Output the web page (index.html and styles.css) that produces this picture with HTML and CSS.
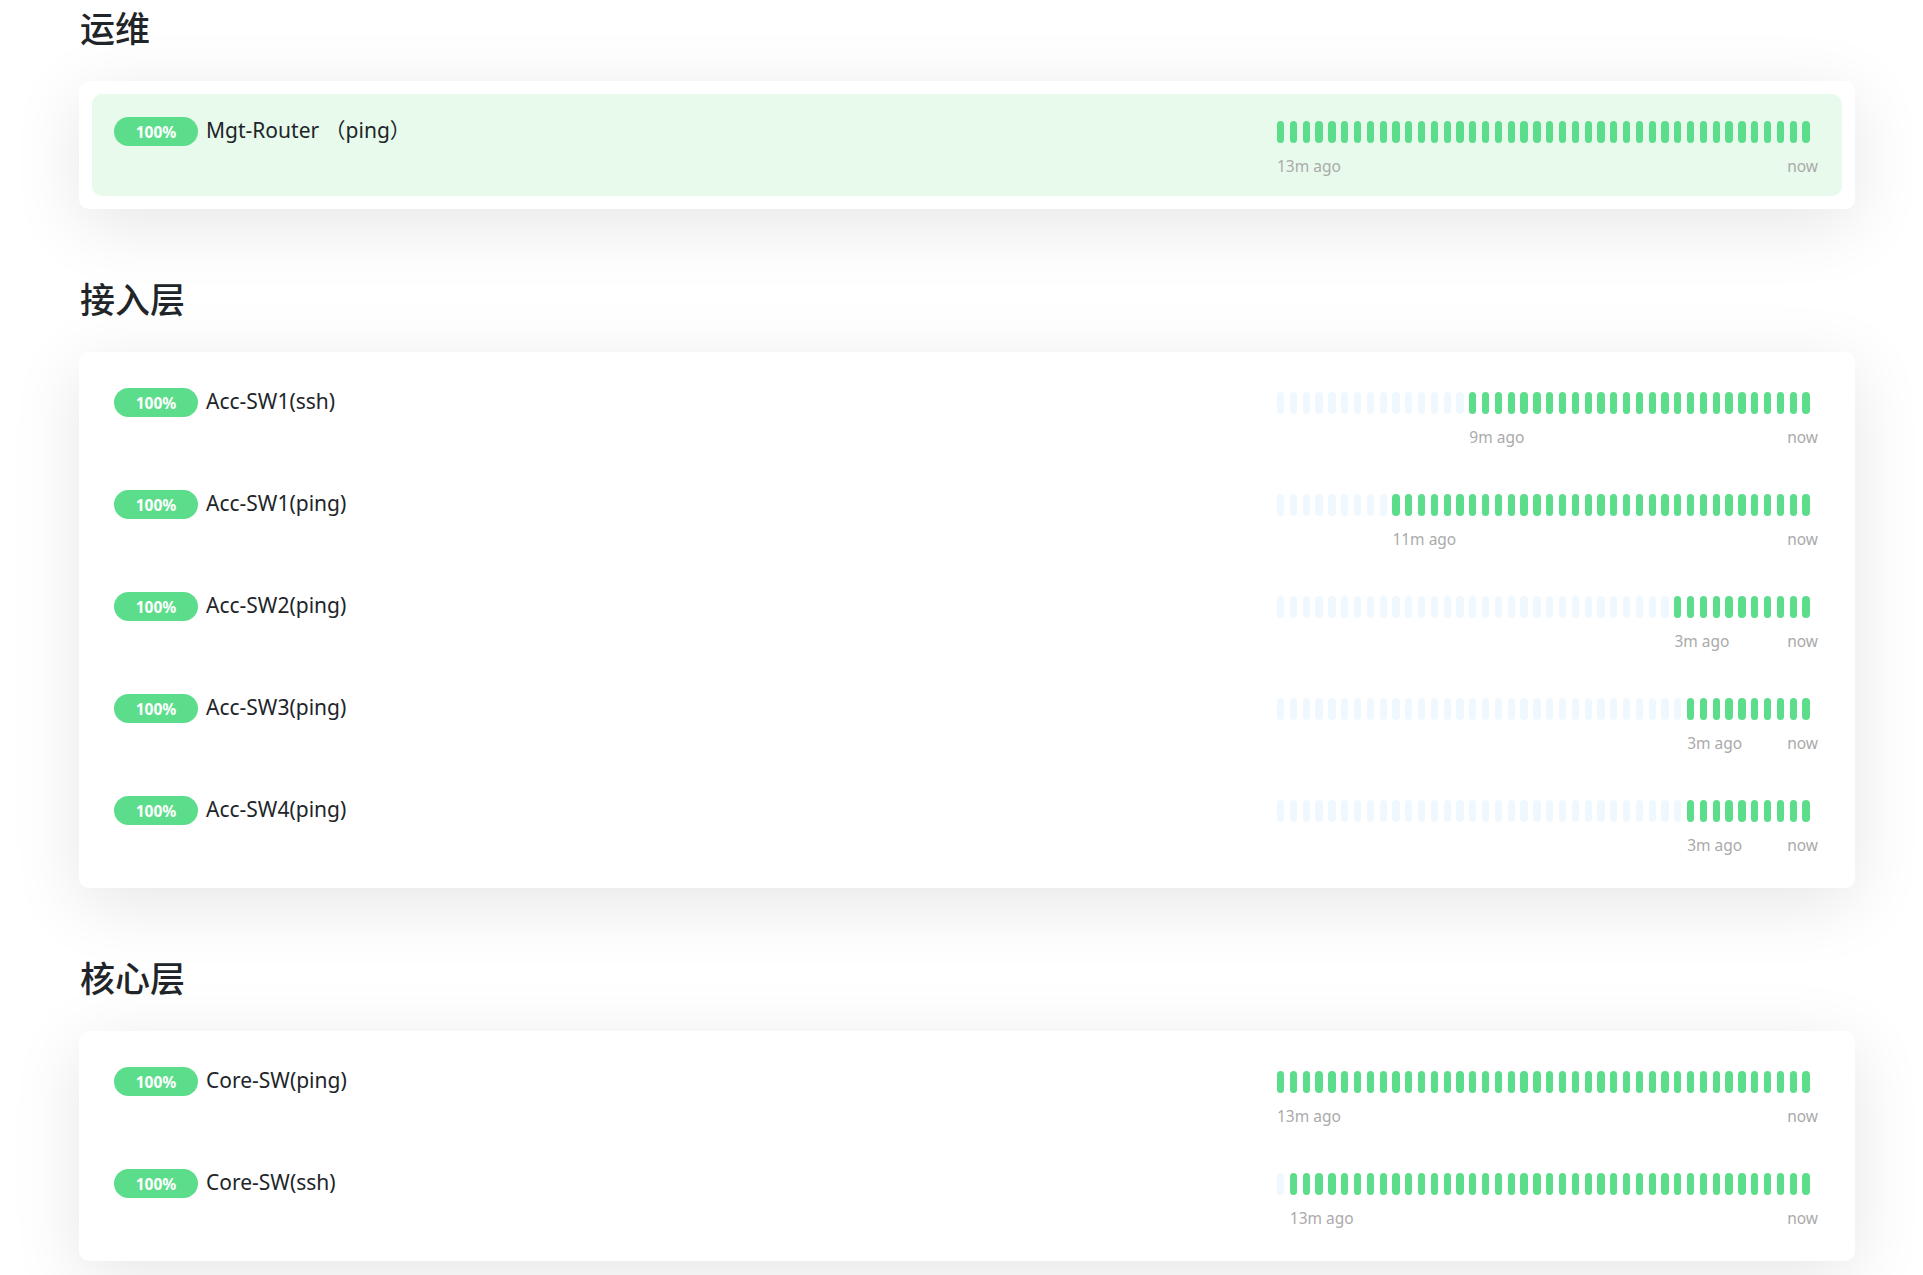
FILE: index.html
```html
<!DOCTYPE html>
<html lang="zh-CN">
<head>
<meta charset="utf-8">
<title>状态页</title>
<link rel="stylesheet" href="styles.css">
</head>
<body>
<main class="page">

  <section class="group">
    <h2 class="group-title">运维</h2>
    <div class="card">
      <div class="item active">
        <div class="info"><span class="pill">100%</span><span class="name">Mgt-Router （ping）</span></div>
        <div class="beats">
          <div class="bar-row"><i class="b"></i><i class="b"></i><i class="b"></i><i class="b"></i><i class="b"></i><i class="b"></i><i class="b"></i><i class="b"></i><i class="b"></i><i class="b"></i><i class="b"></i><i class="b"></i><i class="b"></i><i class="b"></i><i class="b"></i><i class="b"></i><i class="b"></i><i class="b"></i><i class="b"></i><i class="b"></i><i class="b"></i><i class="b"></i><i class="b"></i><i class="b"></i><i class="b"></i><i class="b"></i><i class="b"></i><i class="b"></i><i class="b"></i><i class="b"></i><i class="b"></i><i class="b"></i><i class="b"></i><i class="b"></i><i class="b"></i><i class="b"></i><i class="b"></i><i class="b"></i><i class="b"></i><i class="b"></i><i class="b"></i><i class="b"></i></div>
          <div class="timeline" style="--empty:0"><span>13m ago</span><span>now</span></div>
        </div>
      </div>
    </div>
  </section>

  <section class="group">
    <h2 class="group-title">接入层</h2>
    <div class="card">
      <div class="item">
        <div class="info"><span class="pill">100%</span><span class="name">Acc-SW1(ssh)</span></div>
        <div class="beats">
          <div class="bar-row"><i class="b e"></i><i class="b e"></i><i class="b e"></i><i class="b e"></i><i class="b e"></i><i class="b e"></i><i class="b e"></i><i class="b e"></i><i class="b e"></i><i class="b e"></i><i class="b e"></i><i class="b e"></i><i class="b e"></i><i class="b e"></i><i class="b e"></i><i class="b"></i><i class="b"></i><i class="b"></i><i class="b"></i><i class="b"></i><i class="b"></i><i class="b"></i><i class="b"></i><i class="b"></i><i class="b"></i><i class="b"></i><i class="b"></i><i class="b"></i><i class="b"></i><i class="b"></i><i class="b"></i><i class="b"></i><i class="b"></i><i class="b"></i><i class="b"></i><i class="b"></i><i class="b"></i><i class="b"></i><i class="b"></i><i class="b"></i><i class="b"></i><i class="b"></i></div>
          <div class="timeline" style="--empty:15"><span>9m ago</span><span>now</span></div>
        </div>
      </div>
      <div class="item">
        <div class="info"><span class="pill">100%</span><span class="name">Acc-SW1(ping)</span></div>
        <div class="beats">
          <div class="bar-row"><i class="b e"></i><i class="b e"></i><i class="b e"></i><i class="b e"></i><i class="b e"></i><i class="b e"></i><i class="b e"></i><i class="b e"></i><i class="b e"></i><i class="b"></i><i class="b"></i><i class="b"></i><i class="b"></i><i class="b"></i><i class="b"></i><i class="b"></i><i class="b"></i><i class="b"></i><i class="b"></i><i class="b"></i><i class="b"></i><i class="b"></i><i class="b"></i><i class="b"></i><i class="b"></i><i class="b"></i><i class="b"></i><i class="b"></i><i class="b"></i><i class="b"></i><i class="b"></i><i class="b"></i><i class="b"></i><i class="b"></i><i class="b"></i><i class="b"></i><i class="b"></i><i class="b"></i><i class="b"></i><i class="b"></i><i class="b"></i><i class="b"></i></div>
          <div class="timeline" style="--empty:9"><span>11m ago</span><span>now</span></div>
        </div>
      </div>
      <div class="item">
        <div class="info"><span class="pill">100%</span><span class="name">Acc-SW2(ping)</span></div>
        <div class="beats">
          <div class="bar-row"><i class="b e"></i><i class="b e"></i><i class="b e"></i><i class="b e"></i><i class="b e"></i><i class="b e"></i><i class="b e"></i><i class="b e"></i><i class="b e"></i><i class="b e"></i><i class="b e"></i><i class="b e"></i><i class="b e"></i><i class="b e"></i><i class="b e"></i><i class="b e"></i><i class="b e"></i><i class="b e"></i><i class="b e"></i><i class="b e"></i><i class="b e"></i><i class="b e"></i><i class="b e"></i><i class="b e"></i><i class="b e"></i><i class="b e"></i><i class="b e"></i><i class="b e"></i><i class="b e"></i><i class="b e"></i><i class="b e"></i><i class="b"></i><i class="b"></i><i class="b"></i><i class="b"></i><i class="b"></i><i class="b"></i><i class="b"></i><i class="b"></i><i class="b"></i><i class="b"></i><i class="b"></i></div>
          <div class="timeline" style="--empty:31"><span>3m ago</span><span>now</span></div>
        </div>
      </div>
      <div class="item">
        <div class="info"><span class="pill">100%</span><span class="name">Acc-SW3(ping)</span></div>
        <div class="beats">
          <div class="bar-row"><i class="b e"></i><i class="b e"></i><i class="b e"></i><i class="b e"></i><i class="b e"></i><i class="b e"></i><i class="b e"></i><i class="b e"></i><i class="b e"></i><i class="b e"></i><i class="b e"></i><i class="b e"></i><i class="b e"></i><i class="b e"></i><i class="b e"></i><i class="b e"></i><i class="b e"></i><i class="b e"></i><i class="b e"></i><i class="b e"></i><i class="b e"></i><i class="b e"></i><i class="b e"></i><i class="b e"></i><i class="b e"></i><i class="b e"></i><i class="b e"></i><i class="b e"></i><i class="b e"></i><i class="b e"></i><i class="b e"></i><i class="b e"></i><i class="b"></i><i class="b"></i><i class="b"></i><i class="b"></i><i class="b"></i><i class="b"></i><i class="b"></i><i class="b"></i><i class="b"></i><i class="b"></i></div>
          <div class="timeline" style="--empty:32"><span>3m ago</span><span>now</span></div>
        </div>
      </div>
      <div class="item">
        <div class="info"><span class="pill">100%</span><span class="name">Acc-SW4(ping)</span></div>
        <div class="beats">
          <div class="bar-row"><i class="b e"></i><i class="b e"></i><i class="b e"></i><i class="b e"></i><i class="b e"></i><i class="b e"></i><i class="b e"></i><i class="b e"></i><i class="b e"></i><i class="b e"></i><i class="b e"></i><i class="b e"></i><i class="b e"></i><i class="b e"></i><i class="b e"></i><i class="b e"></i><i class="b e"></i><i class="b e"></i><i class="b e"></i><i class="b e"></i><i class="b e"></i><i class="b e"></i><i class="b e"></i><i class="b e"></i><i class="b e"></i><i class="b e"></i><i class="b e"></i><i class="b e"></i><i class="b e"></i><i class="b e"></i><i class="b e"></i><i class="b e"></i><i class="b"></i><i class="b"></i><i class="b"></i><i class="b"></i><i class="b"></i><i class="b"></i><i class="b"></i><i class="b"></i><i class="b"></i><i class="b"></i></div>
          <div class="timeline" style="--empty:32"><span>3m ago</span><span>now</span></div>
        </div>
      </div>
    </div>
  </section>

  <section class="group">
    <h2 class="group-title">核心层</h2>
    <div class="card">
      <div class="item">
        <div class="info"><span class="pill">100%</span><span class="name">Core-SW(ping)</span></div>
        <div class="beats">
          <div class="bar-row"><i class="b"></i><i class="b"></i><i class="b"></i><i class="b"></i><i class="b"></i><i class="b"></i><i class="b"></i><i class="b"></i><i class="b"></i><i class="b"></i><i class="b"></i><i class="b"></i><i class="b"></i><i class="b"></i><i class="b"></i><i class="b"></i><i class="b"></i><i class="b"></i><i class="b"></i><i class="b"></i><i class="b"></i><i class="b"></i><i class="b"></i><i class="b"></i><i class="b"></i><i class="b"></i><i class="b"></i><i class="b"></i><i class="b"></i><i class="b"></i><i class="b"></i><i class="b"></i><i class="b"></i><i class="b"></i><i class="b"></i><i class="b"></i><i class="b"></i><i class="b"></i><i class="b"></i><i class="b"></i><i class="b"></i><i class="b"></i></div>
          <div class="timeline" style="--empty:0"><span>13m ago</span><span>now</span></div>
        </div>
      </div>
      <div class="item">
        <div class="info"><span class="pill">100%</span><span class="name">Core-SW(ssh)</span></div>
        <div class="beats">
          <div class="bar-row"><i class="b e"></i><i class="b"></i><i class="b"></i><i class="b"></i><i class="b"></i><i class="b"></i><i class="b"></i><i class="b"></i><i class="b"></i><i class="b"></i><i class="b"></i><i class="b"></i><i class="b"></i><i class="b"></i><i class="b"></i><i class="b"></i><i class="b"></i><i class="b"></i><i class="b"></i><i class="b"></i><i class="b"></i><i class="b"></i><i class="b"></i><i class="b"></i><i class="b"></i><i class="b"></i><i class="b"></i><i class="b"></i><i class="b"></i><i class="b"></i><i class="b"></i><i class="b"></i><i class="b"></i><i class="b"></i><i class="b"></i><i class="b"></i><i class="b"></i><i class="b"></i><i class="b"></i><i class="b"></i><i class="b"></i><i class="b"></i></div>
          <div class="timeline" style="--empty:1"><span>13m ago</span><span>now</span></div>
        </div>
      </div>
    </div>
  </section>

</main>
</body>
</html>
```

FILE: styles.css
```css
* {
  box-sizing: border-box;
}

html,
body {
  margin: 0;
  padding: 0;
  background: #ffffff;
}

body {
  font-family: "Noto Sans", "Noto Sans CJK SC", sans-serif;
  color: #212529;
  overflow: hidden;
}

.page {
  width: 1776px;
  margin-left: 79px;
  padding-top: 6px;
}

.group {
  margin-bottom: 68px;
}

.group-title {
  margin: 0 0 33px 1px;
  font-family: "Noto Sans CJK SC", "Noto Sans", sans-serif;
  font-size: 35px;
  font-weight: 500;
  line-height: 42px;
  color: #212529;
}

.card {
  background: #ffffff;
  border-radius: 10px;
  padding: 13px;
  box-shadow: 0 15px 70px rgba(0, 0, 0, 0.1);
}

.item {
  height: 102px;
  border-radius: 10px;
  padding: 23px 24px 0 22px;
  display: flex;
  justify-content: space-between;
  align-items: flex-start;
}

.item.active {
  background: #e7faec;
}

.info {
  display: flex;
  align-items: center;
  gap: 8px;
  height: 29px;
}

.pill {
  display: inline-flex;
  align-items: center;
  justify-content: center;
  width: 84px;
  height: 29px;
  border-radius: 50rem;
  background: #5cdd8b;
  color: #ffffff;
  font-size: 15.5px;
  font-weight: 700;
}

.name {
  font-size: 21px;
  line-height: 29px;
  padding-bottom: 2px;
  color: #212529;
}

.beats {
  width: 541px;
  padding-top: 3.5px;
}

.bar-row {
  display: flex;
  gap: 5.52px;
  height: 22px;
}

.b {
  display: block;
  width: 7.3px;
  height: 22px;
  border-radius: 50rem;
  background: #5cdd8b;
}

.b.e {
  background: #f0f8ff;
}

.timeline {
  display: flex;
  justify-content: space-between;
  margin-top: 13px;
  padding-left: calc(var(--empty) * 12.82px);
  font-size: 15.5px;
  line-height: 20px;
  color: #aaaaaa;
}
```
